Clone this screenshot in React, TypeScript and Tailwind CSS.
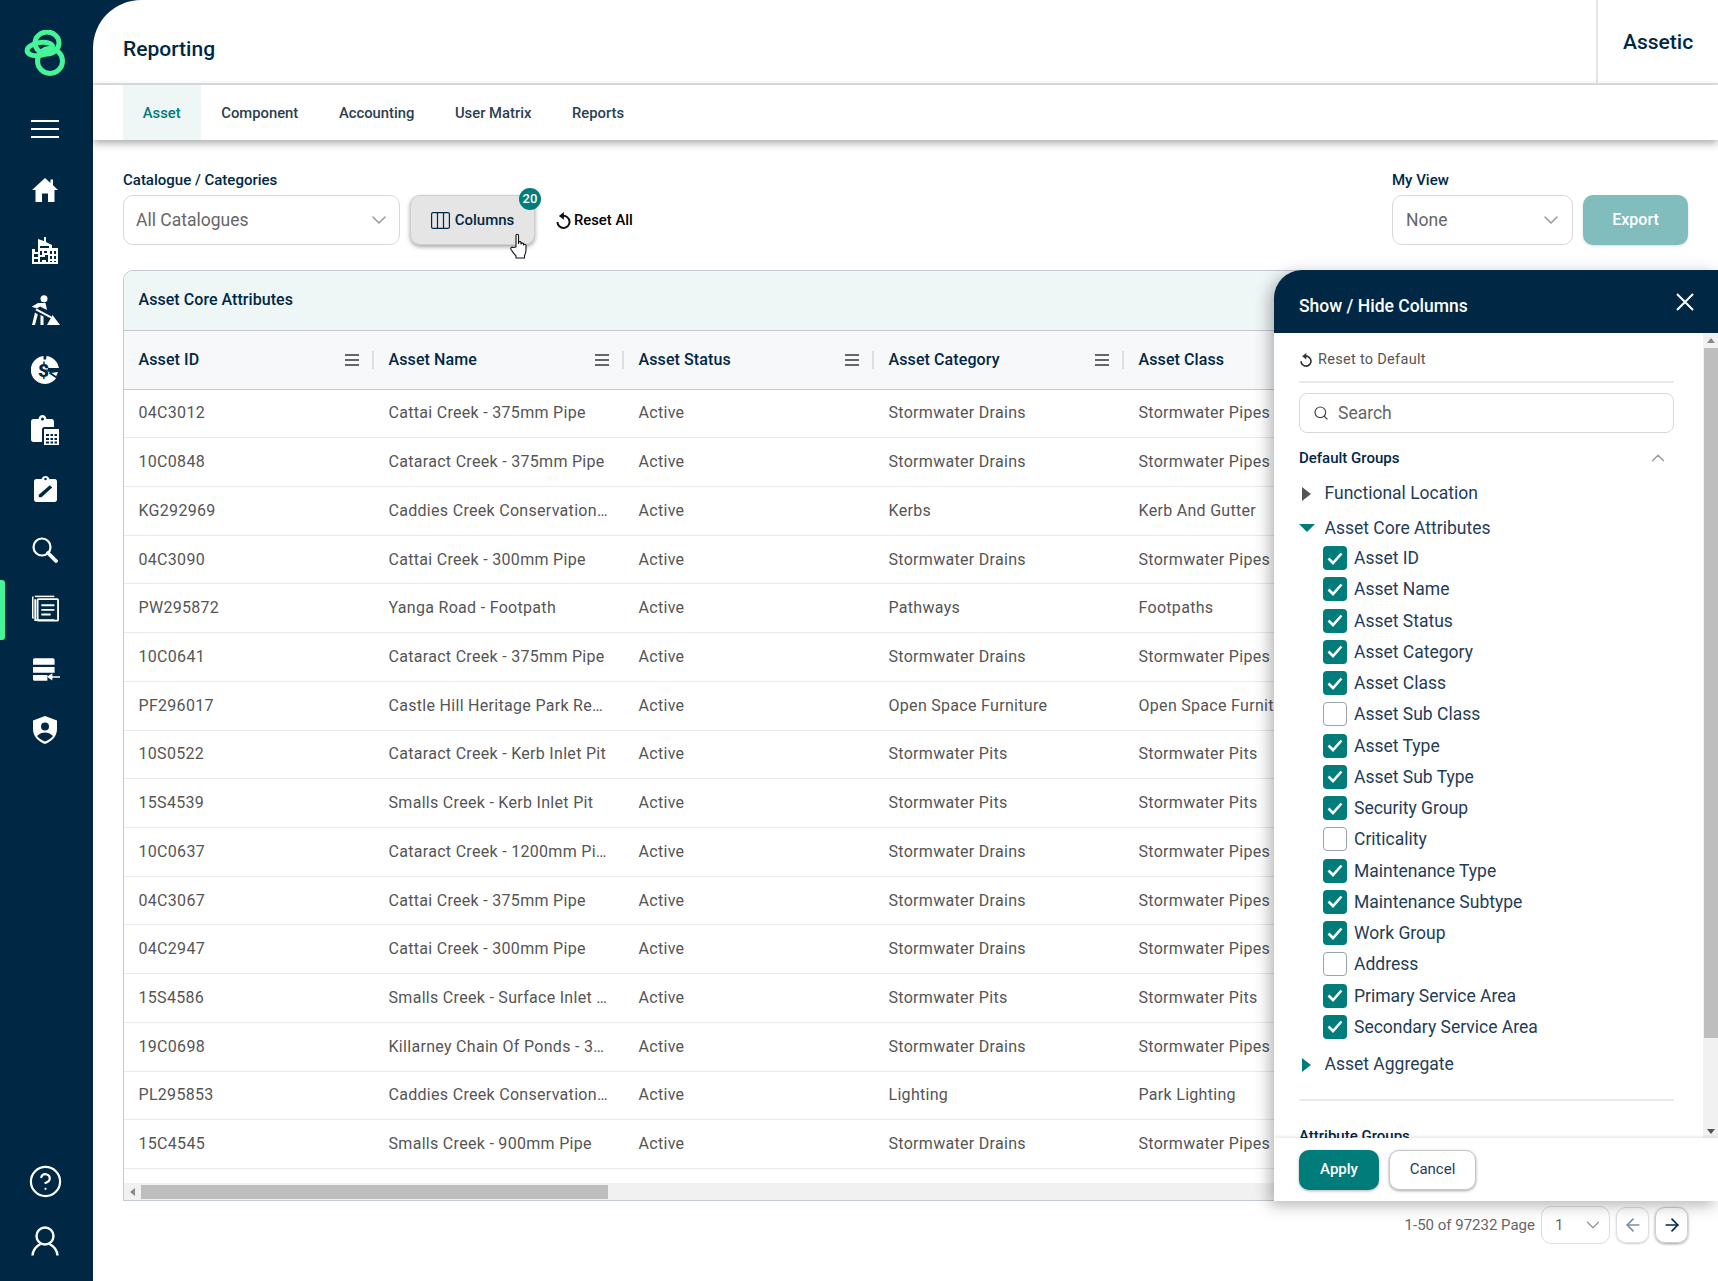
import { useState } from 'react'
import { ArrowLeft, ArrowRight, ChevronDown, ChevronUp, CircleHelp, Search } from 'lucide-react'

const ROWS = [
  ['04C3012', 'Cattai Creek - 375mm Pipe', 'Active', 'Stormwater Drains', 'Stormwater Pipes'],
  ['10C0848', 'Cataract Creek - 375mm Pipe', 'Active', 'Stormwater Drains', 'Stormwater Pipes'],
  ['KG292969', 'Caddies Creek Conservation…', 'Active', 'Kerbs', 'Kerb And Gutter'],
  ['04C3090', 'Cattai Creek - 300mm Pipe', 'Active', 'Stormwater Drains', 'Stormwater Pipes'],
  ['PW295872', 'Yanga Road - Footpath', 'Active', 'Pathways', 'Footpaths'],
  ['10C0641', 'Cataract Creek - 375mm Pipe', 'Active', 'Stormwater Drains', 'Stormwater Pipes'],
  ['PF296017', 'Castle Hill Heritage Park Re…', 'Active', 'Open Space Furniture', 'Open Space Furniture'],
  ['10S0522', 'Cataract Creek - Kerb Inlet Pit', 'Active', 'Stormwater Pits', 'Stormwater Pits'],
  ['15S4539', 'Smalls Creek - Kerb Inlet Pit', 'Active', 'Stormwater Pits', 'Stormwater Pits'],
  ['10C0637', 'Cataract Creek - 1200mm Pi…', 'Active', 'Stormwater Drains', 'Stormwater Pipes'],
  ['04C3067', 'Cattai Creek - 375mm Pipe', 'Active', 'Stormwater Drains', 'Stormwater Pipes'],
  ['04C2947', 'Cattai Creek - 300mm Pipe', 'Active', 'Stormwater Drains', 'Stormwater Pipes'],
  ['15S4586', 'Smalls Creek - Surface Inlet …', 'Active', 'Stormwater Pits', 'Stormwater Pits'],
  ['19C0698', 'Killarney Chain Of Ponds - 3…', 'Active', 'Stormwater Drains', 'Stormwater Pipes'],
  ['PL295853', 'Caddies Creek Conservation…', 'Active', 'Lighting', 'Park Lighting'],
  ['15C4545', 'Smalls Creek - 900mm Pipe', 'Active', 'Stormwater Drains', 'Stormwater Pipes'],
]

const HEADERS = ['Asset ID', 'Asset Name', 'Asset Status', 'Asset Category', 'Asset Class']

const ATTRIBUTES: [string, boolean][] = [
  ['Asset ID', true],
  ['Asset Name', true],
  ['Asset Status', true],
  ['Asset Category', true],
  ['Asset Class', true],
  ['Asset Sub Class', false],
  ['Asset Type', true],
  ['Asset Sub Type', true],
  ['Security Group', true],
  ['Criticality', false],
  ['Maintenance Type', true],
  ['Maintenance Subtype', true],
  ['Work Group', true],
  ['Address', false],
  ['Primary Service Area', true],
  ['Secondary Service Area', true],
]

const TABS = ['Asset', 'Component', 'Accounting', 'User Matrix', 'Reports']

function Logo() {
  return (
    <svg width="42" height="46" viewBox="-1 0 42 46" fill="none" stroke="#45f598" strokeWidth="5">
      <ellipse cx="22" cy="13" rx="12" ry="11" />
      <circle cx="25" cy="31" r="12.500" />
      <ellipse cx="15" cy="19" rx="13" ry="6.500" transform="rotate(-10 15 19)" />
    </svg>
  )
}

function HomeIcon() {
  return (
    <svg width="26" height="24" viewBox="0 0 26 24" fill="white">
      <path d="M13 0 18.500 5V1.500H21V7.300L26 12H22.500V24H16V15.500H10V24H3.500V12H0Z" />
    </svg>
  )
}

function BuildingsIcon() {
  return (
    <svg width="26" height="27" viewBox="0 0 26 27" fill="white" fillRule="evenodd">
      <path d="M0 27V12H3V15H6V2L12 4V0H14V5L20 8V11H26V27ZM2 17V20H6V17ZM2 22V25H6V22ZM8 14V18H10V14ZM12 14V16H15V14ZM8 9V11H17V9ZM8 20V25H10V23H14V25H16V18H13V20ZM18 14V17H20V14ZM22 14V17H24V14ZM18 19V22H20V19ZM22 19V22H24V19ZM18 24V25H20V24ZM22 24V25H24V24Z" />
    </svg>
  )
}

function WorkerIcon() {
  return (
    <svg width="29" height="30" viewBox="0 0 29 30" fill="white">
      <circle cx="13" cy="3.800" r="3.500" />
      <path d="M.7 11.700 7 8H14.500L16 15 9 11.500 6 13.500Z" />
      <path d="M5.500 13.500 20.500 21.500 19.500 23.200 4.500 15.200Z" />
      <path d="M4 17.500 1 30H4L6.800 19.500ZM9.500 20V30H12.500V21.500Z" />
      <path d="M21.500 20 29 30H16Z" />
    </svg>
  )
}

function DollarPieIcon() {
  return (
    <svg width="28" height="28" viewBox="0 0 28 28">
      <path d="M12.500 0a14 14 0 1 0 13.400 21L14 13.500l4 0 9.900 0A14 14 0 0 0 15.500 0L15 3.500h-2.500Z" fill="white" />
      <path d="M28 13H19V10h7.600ZM27 16l-7 1 5 3.500Z" fill="white" />
      <text x="12.500" y="20.500" textAnchor="middle" fontFamily="Roboto, sans-serif" fontWeight="900" fontSize="19" fill="#002845">
        $
      </text>
      <path d="M17 12h11v2H17ZM19 16l9 6-1 1.500-9-6Z" fill="#002845" />
    </svg>
  )
}

function ClipboardCalcIcon() {
  return (
    <svg width="28" height="30" viewBox="0 0 28 30" fill="white" fillRule="evenodd">
      <path d="M2.500 4H7.500C8 1.500 9.500 0 11.500 0S15 1.500 15.500 4H20.500C22 4 23 5 23 6.500V12H13.500C12 12 11 13 11 14.500V27H2.500C1 27 0 26 0 24.500V6.500C0 5 1 4 2.500 4ZM11.500 2.500A1.500 1.500 0 1 0 11.500 5.500 1.500 1.500 0 0 0 11.500 2.500Z" />
      <path d="M13 14H28V30H13ZM15 19V21H18V19ZM19.500 19V21H22V19ZM23.500 19V21H26V19ZM15 23V25H18V23ZM19.500 23V25H22V23ZM23.500 23V25H26V23ZM15 26.500V28.500H18V26.500ZM19.500 26.500V28.500H22V26.500ZM23.500 26.500V28.500H26V26.500Z" />
    </svg>
  )
}

function ClipboardEditIcon() {
  return (
    <svg width="23" height="26" viewBox="0 0 24 27" fill="white" fillRule="evenodd" className="mb-[2px]">
      <path d="M2.500 3H8C8.500 1.200 10 0 12 0S15.500 1.200 16 3H21.500C23 3 24 4 24 5.500V24.500C24 26 23 27 21.500 27H2.500C1 27 0 26 0 24.500V5.500C0 4 1 3 2.500 3ZM12 1.800A1.300 1.300 0 1 0 12 4.400 1.300 1.300 0 0 0 12 1.800ZM16.500 9.500 5 19.500V22H7.800L19 12Z" />
    </svg>
  )
}

function SearchNavIcon() {
  return (
    <svg width="26" height="26" viewBox="0 0 26 26" fill="none" stroke="white">
      <circle cx="10" cy="10" r="8.500" strokeWidth="2.200" />
      <path d="M16 16 24 24" strokeWidth="3.800" strokeLinecap="round" />
    </svg>
  )
}

function DocsIcon() {
  return (
    <svg width="27" height="27" viewBox="0 0 29 28" fill="none" stroke="white" className="mb-[3px]">
      <path d="M3.500 4V26.500H24" strokeWidth="2" />
      <path d="M.8 1V24H2" strokeWidth="1.600" />
      <path d="M3 1H24" strokeWidth="1.600" />
      <rect x="6" y="4" width="22" height="23" strokeWidth="2" rx="1" />
      <path d="M10 10.500H24M10 15.500H24M10 20.500H20" strokeWidth="2" />
    </svg>
  )
}

function ServerArrowIcon() {
  return (
    <svg width="27" height="27" viewBox="0 0 30 27" fill="white" className="ml-[3px]">
      <path d="M2 0H22C23.500 0 24 1 24 2V7H0V2C0 1 .5 0 2 0ZM0 9.500H24V16H0ZM0 18.500H16V25H2C1 25 0 24.500 0 23Z" />
      <path d="M30 21.500H21.500V24.500L15.500 20.500 21.500 16.500V19.900H30Z" />
    </svg>
  )
}

function ShieldIcon() {
  return (
    <svg width="24" height="28" viewBox="0 0 24 28" fill="white" fillRule="evenodd">
      <path d="M12 0 24 4.500V13C24 20 19 25.500 12 28 5 25.500 0 20 0 13V4.500ZM12 6.500A4 4 0 1 0 12 14.500 4 4 0 0 0 12 6.500ZM4 20C6 22.500 9 24.500 12 25.500 15 24.500 18 22.500 20 20 17.500 17.500 14.500 16.500 12 16.500S6.500 17.500 4 20Z" />
    </svg>
  )
}

function UserOutlineIcon() {
  return (
    <svg width="28" height="30" viewBox="0 0 28 30" fill="none" stroke="white" strokeWidth="2.400">
      <circle cx="14" cy="10" r="8.500" />
      <path d="M1.500 29.500C2 23.500 6.500 19.500 9.500 18M26.500 29.500C26 23.500 21.500 19.500 18.500 18" />
    </svg>
  )
}

function ResetIcon({ size = 15, color = 'currentColor' }: { size?: number; color?: string }) {
  return (
    <svg width={size} height={size} viewBox="0 0 24 24" fill="none" stroke={color} strokeWidth="2.800">
      <path d="M11 5.500A8.500 8.500 0 1 1 3.500 14" />
      <path d="M12.500 0 5.500 5.500 12.500 11Z" fill={color} stroke="none" />
    </svg>
  )
}

function ColumnsIcon() {
  return (
    <svg width="19" height="17" viewBox="0 0 19 17" fill="none" stroke="#002845" strokeWidth="1.200">
      <rect x=".6" y=".6" width="17.800" height="15.800" rx="1.500" />
      <path d="M6.500 .6V16.400M12.500 .6V16.400" />
    </svg>
  )
}

function HandCursor() {
  return (
    <svg width="20" height="26" viewBox="0 0 20 26" fill="white" stroke="#111" strokeWidth="1.100" strokeLinejoin="round">
      <path d="M6 14V2.500C6 .8 8.500 .8 8.500 2.500V10.500V9.500C8.500 8.300 11 8.300 11 9.500V11C11 9.800 13.500 9.800 13.500 11V12C13.500 11 16 11 16 12.300V17C16 19.500 15.500 21 14.500 22.500V25H6V23C4 21 2.500 18.500 1 16.500 .2 15 1.800 13.500 3 14.500Z" />
    </svg>
  )
}

function ColumnMenu() {
  return (
    <svg width="14" height="12" viewBox="0 0 14 12" fill="#666">
      <path d="M0 0H14V2H0ZM0 5H14V7H0ZM0 10H14V12H0Z" />
    </svg>
  )
}

function NavItem({ children, active, className }: { children: React.ReactNode; active?: boolean; className?: string }) {
  return (
    <div className={`relative flex w-[93px] items-center justify-center pr-[3px] ${className ?? 'h-[60px]'}`}>
      {active && <span className="absolute left-0 top-0 bottom-0 w-[5px] rounded-r-[3px] bg-[#45f598]" />}
      {children}
    </div>
  )
}

function Sidebar() {
  return (
    <aside className="flex h-full w-[93px] shrink-0 flex-col items-center bg-[#002845] pb-[10px]">
      <div className="mt-[30px] mb-[28px] pr-[3px]">
        <Logo />
      </div>
      <NavItem className="h-[50px]">
        <svg width="28" height="18" viewBox="0 0 28 18" fill="white">
          <path d="M0 0H28V2H0ZM0 8H28V10H0ZM0 16H28V18H0Z" />
        </svg>
      </NavItem>
      <NavItem className="mt-[6px] h-[60px]"><HomeIcon /></NavItem>
      <NavItem><BuildingsIcon /></NavItem>
      <NavItem><WorkerIcon /></NavItem>
      <NavItem><DollarPieIcon /></NavItem>
      <NavItem><ClipboardCalcIcon /></NavItem>
      <NavItem><ClipboardEditIcon /></NavItem>
      <NavItem><SearchNavIcon /></NavItem>
      <NavItem active><DocsIcon /></NavItem>
      <NavItem><ServerArrowIcon /></NavItem>
      <NavItem><ShieldIcon /></NavItem>
      <div className="flex-1" />
      <NavItem><CircleHelp size={35} color="white" strokeWidth={1.500} /></NavItem>
      <NavItem><UserOutlineIcon /></NavItem>
    </aside>
  )
}

function SelectBox({ label, className }: { label: string; className: string }) {
  return (
    <div className={`flex items-center justify-between rounded-[10px] border border-[#d9d9d9] bg-white text-[17.500px] text-[#666] ${className}`}>
      <span>{label}</span>
      <ChevronDown size={24} color="#999" strokeWidth={1.500} />
    </div>
  )
}

function Table() {
  return (
    <div className="relative mr-[30px] h-[931px] overflow-hidden rounded-t-[10px] border border-[#c3c9d0] bg-white">
      <div className="flex h-[60px] items-center border-b border-[#c3c9d0] bg-[#eff6f6] pb-[1px] pl-[14.500px] text-[16px] font-medium tracking-[0.05px] text-[#002845]">
        Asset Core Attributes
      </div>
      <div className="flex h-[58.500px] border-b border-[#c3c9d0] bg-[#f7f8f9]">
        {HEADERS.map((h) => (
          <div key={h} className="flex w-[250px] shrink-0 items-center justify-between pl-[14.500px] text-[16px] font-medium tracking-[0.1px] text-[#002845]">
            <span>{h}</span>
            <span className="flex items-center gap-[13px]">
              <ColumnMenu />
              <span className="h-[18px] w-[2px] bg-[#dde0e3]" />
            </span>
          </div>
        ))}
      </div>
      {ROWS.map((row) => (
        <div key={row[0]} className="flex h-[48.720px] border-b border-[#e7eaee] text-[16px] tracking-[0.3px] text-[#555]">
          {row.map((cell, i) => (
            <div key={i} className="flex w-[250px] shrink-0 items-center pl-[14.500px] whitespace-nowrap">
              {cell}
            </div>
          ))}
        </div>
      ))}
      <div className="absolute bottom-0 left-0 right-0 flex h-[17px] items-center bg-[#f1f1f1]">
        <span className="ml-[6px] h-0 w-0 border-y-[4px] border-r-[5px] border-y-transparent border-r-[#888]" />
        <span className="ml-[6px] h-[14px] w-[467px] bg-[#bebebe]" />
      </div>
    </div>
  )
}

function Checkbox({ checked }: { checked: boolean }) {
  return checked ? (
    <span className="flex h-[24px] w-[24px] shrink-0 items-center justify-center rounded-[4px] bg-[#007d7b]">
      <svg width="16" height="13" viewBox="0 0 16 13" fill="none" stroke="white" strokeWidth="2.600">
        <path d="M1.500 6.500 6 11 14.500 1.500" />
      </svg>
    </span>
  ) : (
    <span className="h-[24px] w-[24px] shrink-0 rounded-[4px] border border-[#9aa4ad] bg-white" />
  )
}

function Panel() {
  return (
    <div className="absolute right-0 top-[270px] flex h-[931px] w-[444px] flex-col overflow-hidden rounded-tl-[28px] bg-white shadow-[-4px_4px_16px_rgba(0,0,0,0.3)]">
      <div className="flex h-[63px] shrink-0 items-center justify-between bg-[#002845] pl-[25px] pr-[24px] text-[17.500px] font-medium text-white">
        <span className="mt-[9px]">Show / Hide Columns</span>
        <svg width="18" height="18" viewBox="0 0 18 18" fill="none" stroke="white" strokeWidth="2">
          <path d="M1 1 17 17M17 1 1 17" />
        </svg>
      </div>
      <div className="relative flex min-h-0 flex-1">
        <div className="min-w-0 flex-1 overflow-hidden pl-[25px] pr-[29px]">
          <div className="flex h-[50px] items-center gap-[5px] border-b-2 border-[#e8ebee] pt-[5px] text-[14.500px] tracking-[0.3px] text-[#555]">
            <ResetIcon size={14} color="#333" />
            Reset to Default
          </div>
          <div className="mt-[10px] flex h-[40px] items-center gap-[9px] rounded-[8px] border border-[#d4d8dc] pl-[13px] text-[17.500px] text-[#666]">
            <Search size={16} color="#444" strokeWidth={1.800} />
            Search
          </div>
          <div className="mt-[13px] flex h-[24px] items-center justify-between pr-[5px] text-[15px] font-medium text-[#002845]">
            Default Groups
            <ChevronUp size={22} color="#999" strokeWidth={1.500} />
          </div>
          <div className="mt-[6px] flex h-[35px] items-center text-[17.500px] text-[#1f3d57]">
            <span className="ml-[3px] mr-[13.500px] h-0 w-0 border-y-[7.500px] border-l-[9px] border-y-transparent border-l-[#555]" />
            Functional Location
          </div>
          <div className="flex h-[34px] items-center text-[17.500px] text-[#1f3d57]">
            <span className="mr-[9.500px] h-0 w-0 border-x-[8px] border-t-[8px] border-x-transparent border-t-[#007d7b]" />
            Asset Core Attributes
          </div>
          <div className="ml-[24px] mt-[-2.500px]">
            {ATTRIBUTES.map(([name, on]) => (
              <div key={name} className="flex h-[31.250px] items-center gap-[7px] text-[17.500px] text-[#1f3d57]">
                <Checkbox checked={on} />
                {name}
              </div>
            ))}
          </div>
          <div className="mt-[4px] flex h-[36px] items-center border-b-0 text-[17.500px] text-[#1f3d57]">
            <span className="ml-[3px] mr-[13.500px] h-0 w-0 border-y-[7.500px] border-l-[9px] border-y-transparent border-l-[#007d7b]" />
            Asset Aggregate
          </div>
          <div className="mt-[16px] h-[2px] bg-[#e8ebee]" />
          <div className="mt-[24px] text-[15px] font-medium text-[#002845]">Attribute Groups</div>
        </div>
        <div className="flex w-[15px] shrink-0 flex-col items-center bg-[#f1f1f1] pt-[5px]">
          <span className="h-0 w-0 border-x-[4px] border-b-[5px] border-x-transparent border-b-[#888]" />
          <span className="mt-[5px] h-[690px] w-[14px] bg-[#bebebe]" />
          <span className="mt-auto mb-[4px] h-0 w-0 border-x-[4px] border-t-[5px] border-x-transparent border-t-[#555]" />
        </div>
      </div>
      <div className="relative flex h-[63px] shrink-0 items-center gap-[10px] bg-white pl-[25px] shadow-[0_-1px_4px_rgba(0,0,0,0.12)]">
        <button className="h-[40px] w-[80px] rounded-[10px] bg-[#007d7b] text-[15px] font-medium text-white shadow-[0_1px_3px_rgba(0,0,0,0.3)]">
          Apply
        </button>
        <button className="h-[40px] w-[87px] rounded-[10px] border border-[#c6c6c6] bg-white text-[15px] text-[#1f3d57] shadow-[0_1px_3px_rgba(0,0,0,0.35)]">
          Cancel
        </button>
      </div>
    </div>
  )
}

export default function App() {
  const [tab] = useState('Asset')
  return (
    <div className="relative flex h-[1281px] w-[1718px] overflow-hidden bg-[#002845] font-['Roboto',sans-serif]">
      <Sidebar />
      <main className="flex h-full min-w-0 flex-1 flex-col rounded-tl-[48px] bg-white">
        <header className="flex h-[85px] shrink-0 items-stretch justify-between border-b-2 border-[#e3e5e7] pl-[30px]">
          <h1 className="mt-[33.500px] text-[21px] font-medium leading-[30px] text-[#002845]">Reporting</h1>
          <div className="flex w-[122px] border-l-2 border-[#e3e5e7] pl-[25px] pt-[27px] text-[21px] font-medium leading-[30px] text-[#002845]">
            Assetic
          </div>
        </header>
        <nav className="relative flex h-[55px] shrink-0 gap-[1px] pl-[30px] text-[14.800px] font-medium text-[#2b3f50] shadow-[0_3px_8px_rgba(0,0,0,0.35)]">
          {TABS.map((t) => (
            <div key={t} className={`flex items-center px-[19.800px] pt-[2px] ${t === tab ? 'bg-[#eff6f6] text-[#007d7b]' : ''}`}>
              {t}
            </div>
          ))}
        </nav>
        <section className="flex min-h-0 flex-1 flex-col pl-[30px]">
          <div className="mt-[31px] flex items-end justify-between pr-[30px]">
            <div className="flex items-end">
              <div className="flex flex-col">
                <label className="mb-[5px] text-[15px] font-medium leading-[19px] text-[#002845]">Catalogue / Categories</label>
                <SelectBox label="All Catalogues" className="h-[50px] w-[277px] pl-[12px] pr-[8px]" />
              </div>
              <button className="relative ml-[10px] flex h-[50px] w-[125px] items-center justify-center gap-[5px] rounded-[10px] border border-[#cfcfcf] bg-[#e5e5e5] text-[15px] font-medium text-[#002845] shadow-[0_2px_4px_rgba(0,0,0,0.35)]">
                <ColumnsIcon />
                Columns
                <span className="absolute right-[-7px] top-[-8px] flex h-[22px] w-[22px] items-center justify-center rounded-full bg-[#007d7b] text-[13px] font-medium text-white">
                  20
                </span>
                <span className="absolute left-[99px] top-[37px]">
                  <HandCursor />
                </span>
              </button>
              <button className="ml-[20px] flex h-[50px] items-center gap-[2px] text-[14.800px] font-medium text-black">
                <ResetIcon size={17} color="#111" />
                Reset All
              </button>
            </div>
            <div className="flex items-end gap-[10px]">
              <div className="flex flex-col">
                <label className="mb-[5px] text-[15px] font-medium leading-[19px] text-[#002845]">My View</label>
                <SelectBox label="None" className="h-[50px] w-[181px] pl-[13px] pr-[9px]" />
              </div>
              <button className="h-[50px] w-[105px] rounded-[10px] bg-[#80bdbc] text-[16px] font-medium text-white shadow-[0_1px_3px_rgba(0,0,0,0.15)]">
                Export
              </button>
            </div>
          </div>
          <div className="mt-[25px]">
            <Table />
          </div>
          <div className="mt-[5px] flex items-center justify-end gap-[6px] pr-[30px] text-[15px] text-[#666]">
            <span className="mt-[1px]">1-50 of 97232 Page</span>
            <div className="flex h-[38px] w-[69px] items-center justify-between rounded-[10px] border border-[#dedede] pl-[13px] pr-[5px]">
              1
              <ChevronDown size={22} color="#999" strokeWidth={1.500} />
            </div>
            <button className="flex h-[36px] w-[33px] items-center justify-center rounded-[10px] border border-[#e0e0e0] shadow-[0_1px_2px_rgba(0,0,0,0.2)]">
              <ArrowLeft size={20} color="#7b8d9c" strokeWidth={2} />
            </button>
            <button className="flex h-[36px] w-[33px] items-center justify-center rounded-[10px] border border-[#cfcfcf] shadow-[0_1px_3px_rgba(0,0,0,0.4)]">
              <ArrowRight size={20} color="#002845" strokeWidth={2} />
            </button>
          </div>
        </section>
      </main>
      <Panel />
    </div>
  )
}
